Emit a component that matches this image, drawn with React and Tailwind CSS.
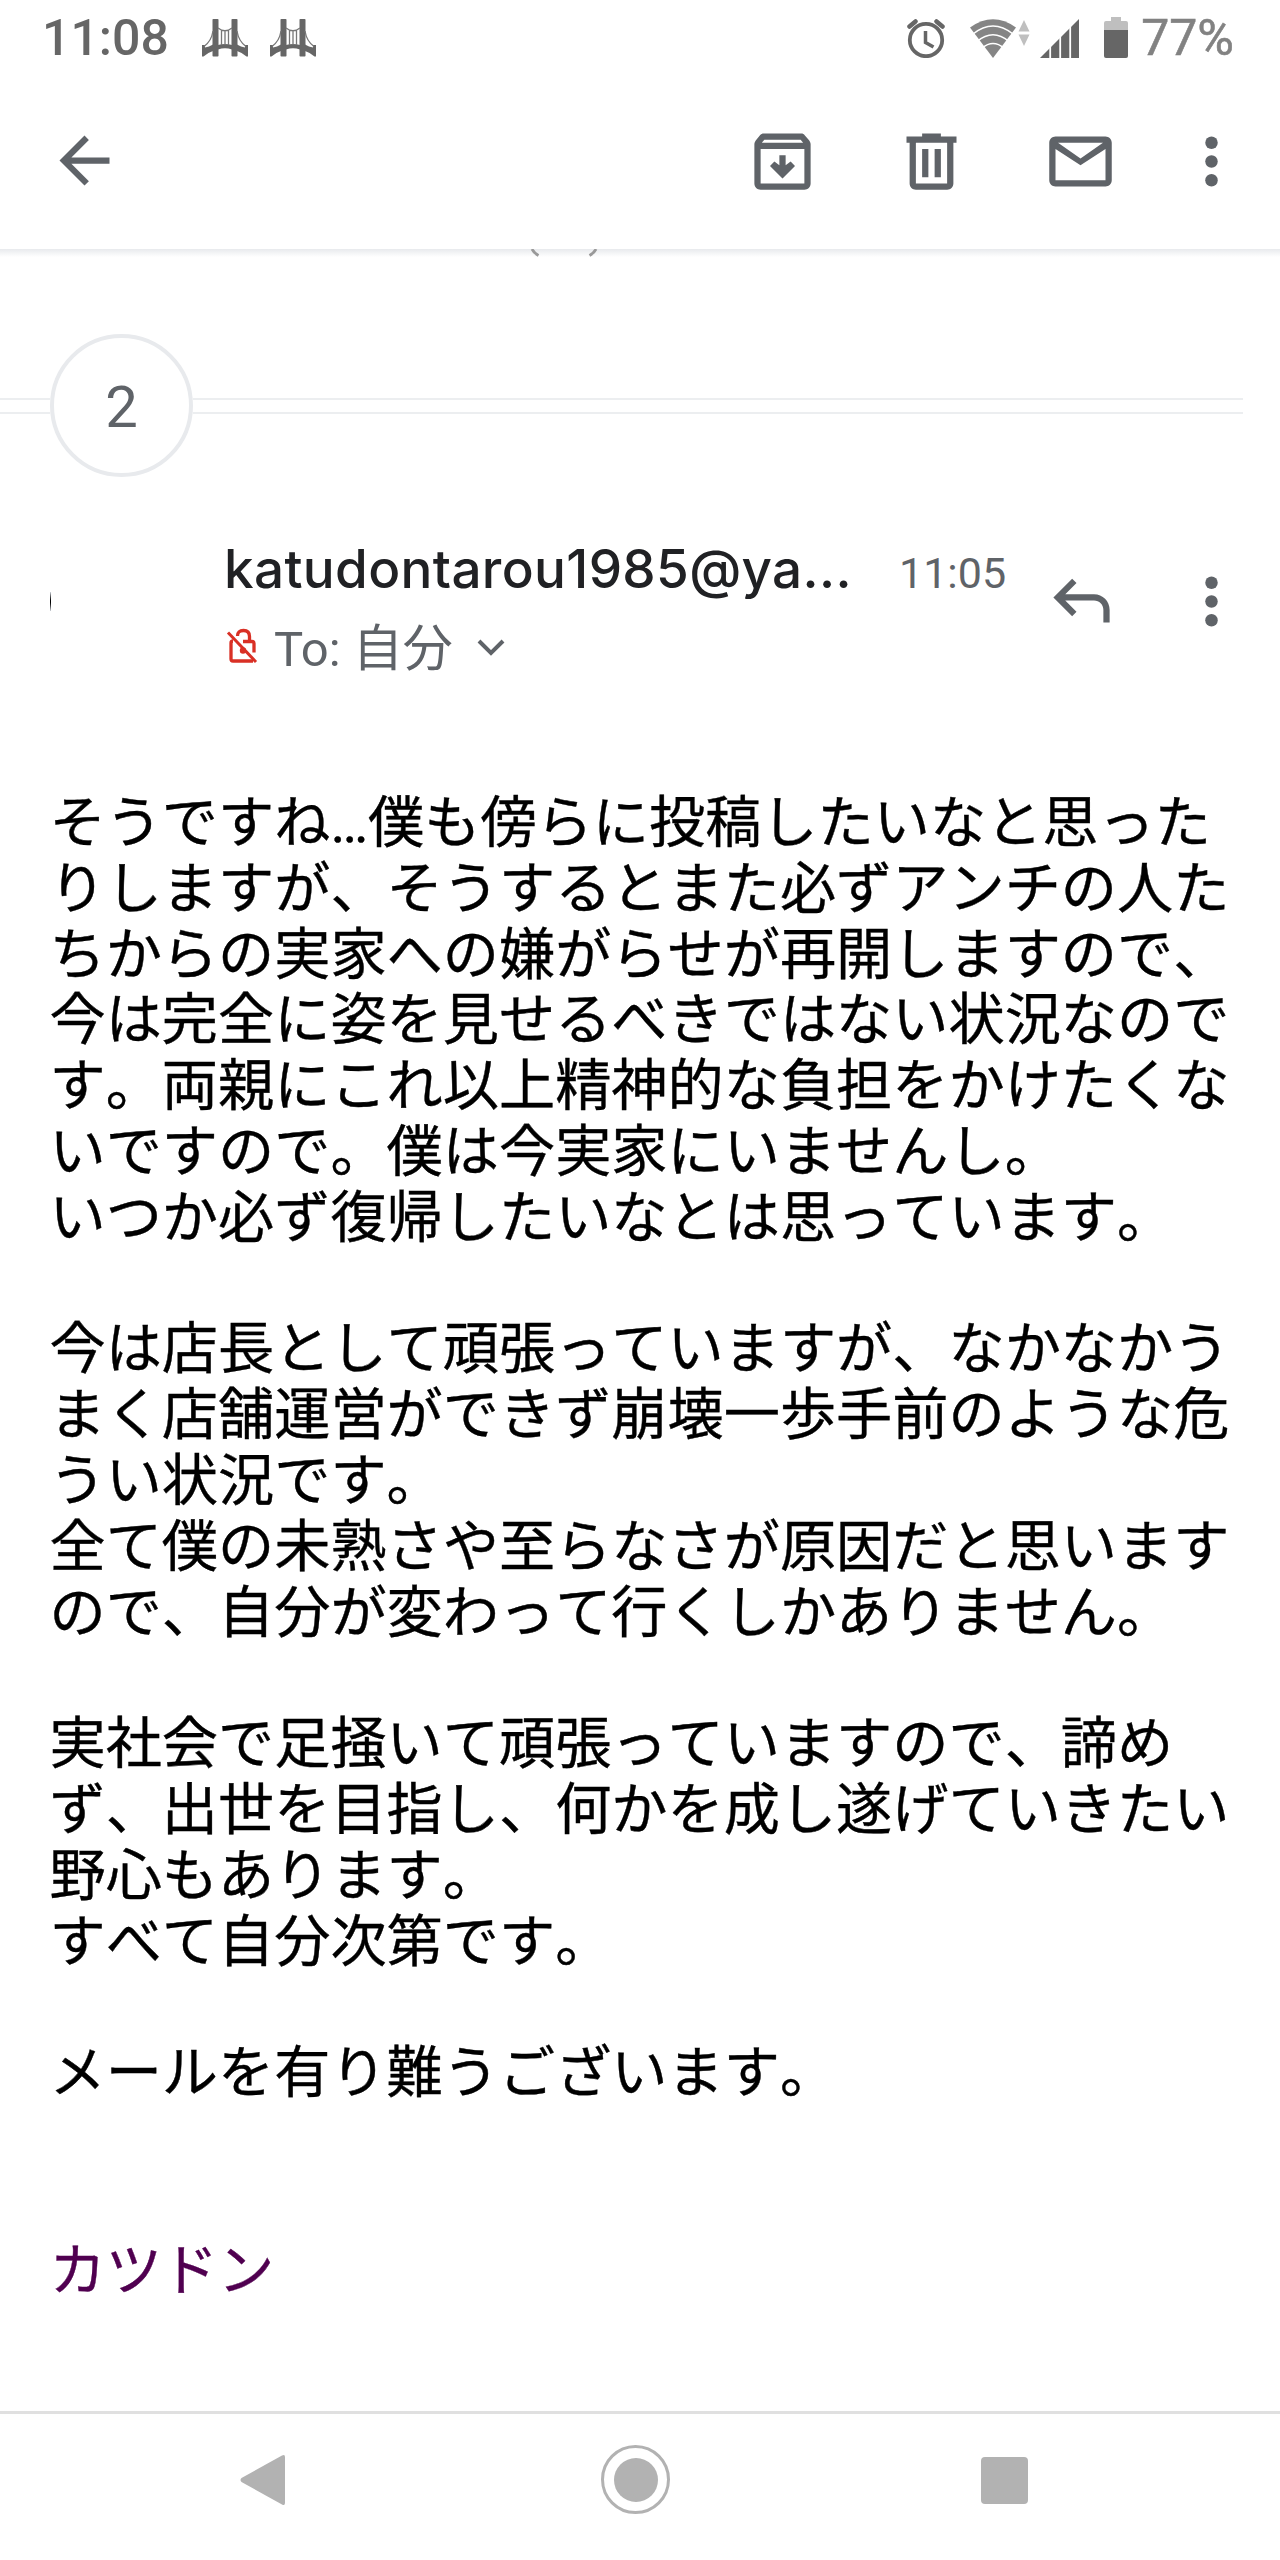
import clsx from 'clsx';

const paragraphs = [
  [
    'そうですね…僕も傍らに投稿したいなと思った',
    'りしますが、そうするとまた必ずアンチの人た',
    'ちからの実家への嫌がらせが再開しますので、',
    '今は完全に姿を見せるべきではない状況なので',
    'す。両親にこれ以上精神的な負担をかけたくな',
    'いですので。僕は今実家にいませんし。',
    'いつか必ず復帰したいなとは思っています。',
  ],
  [
    '今は店長として頑張っていますが、なかなかう',
    'まく店舗運営ができず崩壊一歩手前のような危',
    'うい状況です。',
    '全て僕の未熟さや至らなさが原因だと思います',
    'ので、自分が変わって行くしかありません。',
  ],
  [
    '実社会で足掻いて頑張っていますので、諦め',
    'ず、出世を目指し、何かを成し遂げていきたい',
    '野心もあります。',
    'すべて自分次第です。',
  ],
  ['メールを有り難うございます。'],
];

function Icon({ className, children }) {
  return (
    <svg viewBox="0 0 24 24" fill="currentColor" className={clsx('size-[75px] shrink-0', className)}>
      {children}
    </svg>
  );
}

function MoreIcon({ className }) {
  return (
    <Icon className={className}>
      <circle cx="12" cy="6" r="2" />
      <circle cx="12" cy="12" r="2" />
      <circle cx="12" cy="18" r="2" />
    </Icon>
  );
}

function BridgeIcon() {
  return (
    <svg viewBox="0 0 46 38" className="h-[38px] w-[46px]" fill="#666">
      <rect x="10.5" y="0" width="6" height="37.5" rx="0.8" />
      <rect x="29.5" y="0" width="6" height="37.5" rx="0.8" />
      <path d="M0 26h3v2.500q4-.700 8-3v6.500q-5 1.500-9.500 5.500H0z" />
      <path d="M46 26h-3v2.500q-4-.700-8-3v6.500q5 1.500 9.500 5.500H46z" />
      <path d="M16 26q7-2 14 0v4.500q-7-2.500-14 0z" />
      <path
        d="M2 27.500Q9.500 22 11 12M16 9q7 5.500 14 0M35 12q1.500 10 9 15.500M19.500 11v15M23 12v14M26.500 11v15"
        fill="none"
        stroke="#777"
        strokeWidth="1.300"
      />
    </svg>
  );
}

function StatusBar() {
  return (
    <header className="flex h-[75px] shrink-0 items-center pr-[46px] pl-[42px] text-[#666]">
      <span className="w-[160px] text-[50px] leading-none font-medium">11:08</span>
      <div className="flex gap-[22px]">
        <BridgeIcon />
        <BridgeIcon />
      </div>
      <div className="ml-auto flex items-center">
        <svg viewBox="0 0 38 40" className="h-10 w-[38px]" fill="none" stroke="#666">
          <circle cx="19" cy="22" r="16.200" strokeWidth="3.800" />
          <path d="M2.500 8.500 8.500 3.500M35.500 8.500 29.500 3.500" strokeWidth="4.500" strokeLinecap="round" />
          <path d="M18.500 13v11.500l8 4.500" strokeWidth="3.500" />
        </svg>
        <svg viewBox="0 0 62 40" className="ml-6 h-10 w-[62px]">
          <path d="M1 9.500Q24 -7 47 9.500L24 40z" fill="#858585" />
          <path
            d="M4 16Q24 0 44 16M8 23.500Q24 10 40 23.500M13 30Q24 21 35 30"
            fill="none"
            stroke="#fff"
            strokeWidth="1.600"
          />
          <path d="M55 2l5.500 11.500h-11zM55 28l5.500-11.500h-11z" fill="#bfbfbf" />
        </svg>
        <svg viewBox="0 0 40 40" className="ml-[9px] size-10">
          <path d="M39 1v39H0z" fill="#666" />
          <path d="M10.200 20v20M20.200 10v30M30.200 0v40" stroke="#fff" strokeWidth="1.800" />
        </svg>
        <svg viewBox="0 0 24 42" className="ml-6 h-[42px] w-6">
          <path d="M7 0h10v4h5q2 0 2 2v8H0V6q0-2 2-2h5z" fill="#bfbfbf" />
          <path d="M0 13h24v26q0 2-2 2H2q-2 0-2-2z" fill="#666" />
        </svg>
        <span className="ml-[13px] text-[50px] leading-none text-[#828282] [-webkit-text-stroke:0.6px]">
          77%
        </span>
      </div>
    </header>
  );
}

function Toolbar() {
  return (
    <div className="flex h-[174px] shrink-0 items-start pt-12 pr-[31px] pl-[47px] text-[#5f6368]">
      <Icon>
        <path d="M20 11H7.800l5.600-5.600L12 4l-8 8 8 8 1.400-1.400L7.800 13H20z" />
      </Icon>
      <Icon className="mt-px ml-auto">
        <path
          fillRule="evenodd"
          d="M20.500 5.200 19.100 3.600C18.900 3.200 18.500 3 18 3H6c-.5 0-.900.200-1.200.600L3.500 5.200C3.200 5.600 3 6 3 6.500V19c0 1.100.900 2 2 2h14c1.100 0 2-.900 2-2V6.500c0-.5-.200-.900-.500-1.300zM6.200 5h11.600l.800 1H5.400zM5 19V8h14v11z"
        />
        <path d="M11 10h2v3.200l1.600-1.200 1.400 1.400-4 4-4-4L9.400 12l1.600 1.200z" />
      </Icon>
      <Icon className="mt-px ml-[74px]">
        <path
          fillRule="evenodd"
          d="M15 4V3H9v1H4v2h1v13c0 1.100.900 2 2 2h10c1.100 0 2-.900 2-2V6h1V4zM17 19H7V6h10z"
        />
        <path d="M9 8h2v9H9zM13 8h2v9h-2z" />
      </Icon>
      <Icon className="mt-px ml-[74px]">
        <path
          fillRule="evenodd"
          d="M20 4H4c-1.100 0-2 .9-2 2v12c0 1.100.9 2 2 2h16c1.100 0 2-.9 2-2V6c0-1.100-.9-2-2-2zM20 18H4V8l8 5.200L20 8zM12 11 4.800 6h14.400z"
        />
      </Icon>
      <MoreIcon className="mt-px ml-14" />
    </div>
  );
}

// Shadow under the toolbar, with the last bit of the message scrolled beneath it
function ToolbarShadow() {
  return (
    <div className="h-2 bg-linear-to-b from-[#e8eaed] to-white pl-[530px]">
      <svg viewBox="0 0 70 8" className="h-2 w-[70px]" fill="none" stroke="#999" strokeWidth="2.800">
        <path d="M2 0q2 4 6.500 6.500M66 0q-2 4-6.500 6.500" />
      </svg>
    </div>
  );
}

function ThreadDivider() {
  return (
    <div className="mt-[77px] flex h-[143px] items-center">
      <div className="h-4 w-[50px] border-y-2 border-[#eceef0]" />
      <div className="flex size-[143px] items-center justify-center rounded-full border-4 border-[#e8eaed] pt-[3px] text-[58px] text-[#5f6368]">
        2
      </div>
      <div className="mr-[37px] h-4 flex-1 border-y-2 border-[#eceef0]" />
    </div>
  );
}

function MessageHeader() {
  return (
    <div className="flex h-[314px] items-start pt-[64px] pr-[31px] text-[#5f6368]">
      <div className="mt-[51px] ml-[50px] h-[19px] w-px bg-linear-to-b from-gray-300 via-black to-gray-300" />
      <div className="-mt-[3px] ml-[173px] w-[640px]">
        <div className="font-['Inter','Liberation_Sans',sans-serif] text-[53px] leading-[62px] font-medium tracking-[0.35px] whitespace-nowrap text-[#202124]">
          katudontarou1985@ya...
        </div>
        <div className="mt-4 flex items-center text-[49px] leading-[66px]">
          <svg viewBox="0 0 32 36" className="-mt-2 ml-0.5 h-9 w-8" fill="none" stroke="#d93025">
            <path d="M2 4.500 30 34" strokeWidth="3" />
            <path
              d="M7 13q-2 0-2 2v16q0 2 2 2h20M17 13.500h9q2 0 2 2v9M11.500 8q0-5.500 6-5.500t6 6v5"
              strokeWidth="3.300"
            />
            <circle cx="17" cy="22.500" r="3.200" fill="#d93025" stroke="none" />
          </svg>
          <span className="ml-4">
            To: <span className="text-[50px]">自分</span>
          </span>
          <svg viewBox="0 0 28 18" className="-mt-1 ml-[24px] h-[18px] w-7" fill="none" stroke="currentColor">
            <path d="M2 2l12 12L26 2" strokeWidth="4" />
          </svg>
        </div>
      </div>
      <span className="mt-[7px] ml-[35px] text-[43px] leading-[50px]">11:05</span>
      <Icon className="mt-[22px] ml-auto">
        <path d="M16 10H6.800l3.600-3.600L9 5l-6 6 6 6 1.400-1.400L6.800 12H16c1.700 0 3 1.300 3 3v4h2v-4c0-2.800-2.200-5-5-5z" />
      </Icon>
      <MoreIcon className="mt-[23px] ml-[55px]" />
    </div>
  );
}

function MessageBody() {
  return (
    <div className="px-[49.500px] text-[56.200px] leading-[65.800px] whitespace-nowrap text-black [font-kerning:none] [-webkit-text-stroke:0.4px]">
      {paragraphs.map((lines) => (
        <p key={lines[0]} className="mb-[65.800px]">
          {lines.map((line) => (
            <span key={line} className="block">
              {line}
            </span>
          ))}
        </p>
      ))}
      <p className="mt-[131.600px] text-[#500050]">カツドン</p>
    </div>
  );
}

function NavigationBar() {
  return (
    <nav className="flex h-[149px] shrink-0 items-start border-t-[3px] border-[#e0e0e0] pt-[31px] pl-[240px] text-[#b2b2b2]">
      <svg viewBox="0 0 45 50" className="mt-2.5 h-[50px] w-[45px]" fill="currentColor">
        <path d="M42 .5Q45 -1 45 2v46q0 3-3 1.500L1.500 27q-2-2 0-4z" />
      </svg>
      <div className="ml-[316px] flex size-[69px] items-center justify-center rounded-full border-[3px] border-[#b2b2b2]">
        <div className="size-11 rounded-full bg-[#b2b2b2]" />
      </div>
      <div className="mt-[12px] ml-[311px] size-[47px] rounded bg-[#b2b2b2]" />
    </nav>
  );
}

function App() {
  return (
    <div className="flex h-[2560px] w-[1280px] flex-col overflow-hidden bg-white font-['Roboto','Noto_Sans_CJK_JP',sans-serif]">
      <StatusBar />
      <Toolbar />
      <main className="min-h-0 flex-1 overflow-hidden">
        <ToolbarShadow />
        <ThreadDivider />
        <MessageHeader />
        <MessageBody />
      </main>
      <NavigationBar />
    </div>
  );
}

export default App;
